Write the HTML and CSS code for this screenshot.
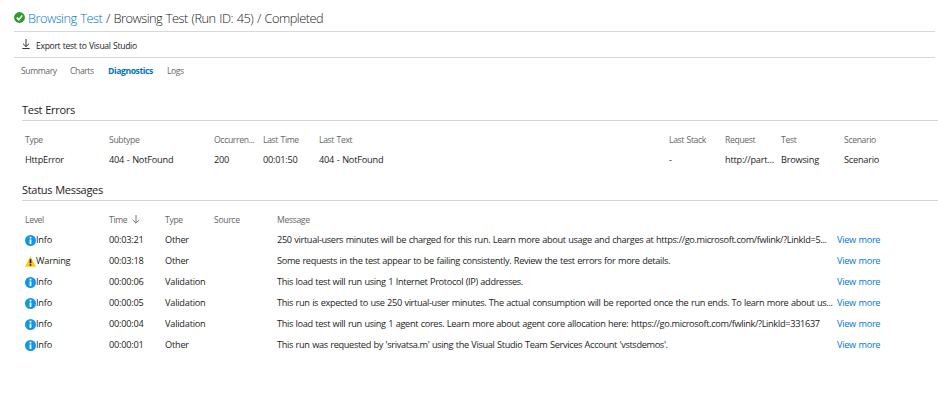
FILE: index.html
```html
<!DOCTYPE html>
<html lang="en">
<head>
<meta charset="utf-8">
<title>Browsing Test</title>
<link rel="stylesheet" href="styles.css">
</head>
<body>
<svg class="defs" width="0" height="0" aria-hidden="true">
  <symbol id="info" viewBox="0 0 10 10"><circle cx="5" cy="5" r="5" fill="#1298e0"/><path d="M5 4v4.2M5 1.7v1.4" stroke="#fff" stroke-width="1.6"/></symbol>
  <symbol id="warning" viewBox="0 0 10 10"><path d="M5 .3 10 9.8H0z" fill="#fc0"/><path d="M5 3v3.5M5 7.4v1.5" stroke="#111" stroke-width="1.5"/></symbol>
</svg>
<header class="title">
  <svg class="ok" viewBox="0 0 11 11"><circle cx="5.5" cy="5.5" r="5.4" fill="#2c9a2c"/><path d="M2.8 5.7 4.8 7.7 8.3 3.5" fill="none" stroke="#fff" stroke-width="1.7"/></svg>
  <h1><a>Browsing Test</a> / Browsing Test (Run ID: 45) / Completed</h1>
</header>
<div class="toolbar">
  <svg class="export" viewBox="0 0 8 10"><path d="M4 0v7.5M1 4.7 4 7.6 7 4.7M.3 9.5h7.4" fill="none" stroke="#222" stroke-width=".9"/></svg>
  <span>Export test to Visual Studio</span>
</div>
<nav class="tabs"><a class="t1">Summary</a><a class="t2">Charts</a><a class="t3 active">Diagnostics</a><a>Logs</a></nav>
<section class="errors">
  <h2>Test Errors</h2>
  <div class="row head"><span>Type</span><span>Subtype</span><span>Occurren...</span><span>Last Time</span><span>Last Text</span><span>Last Stack</span><span>Request</span><span>Test</span><span>Scenario</span></div>
  <div class="row"><span>HttpError</span><span>404 - NotFound</span><span>200</span><span>00:01:50</span><span>404 - NotFound</span><span>-</span><span>http://part...</span><span>Browsing</span><span>Scenario</span></div>
</section>
<section class="messages">
  <h2>Status Messages</h2>
  <div class="row head"><span>Level</span><span>Time <svg class="sort" viewBox="0 0 8 9"><path d="M4 0v8M.6 4.8 4 8.2 7.4 4.8" fill="none" stroke="#666" stroke-width=".9"/></svg></span><span>Type</span><span>Source</span><span>Message</span></div>
  <div class="row"><span class="level"><svg><use href="#info"/></svg>Info</span><span>00:03:21</span><span>Other</span><span></span><span class="message">250 virtual-users minutes will be charged for this run. Learn more about usage and charges at https://go.microsoft.com/fwlink/?LinkId=5...</span><a>View more</a></div>
  <div class="row"><span class="level"><svg><use href="#warning"/></svg>Warning</span><span>00:03:18</span><span>Other</span><span></span><span class="message">Some requests in the test appear to be failing consistently. Review the test errors for more details.</span><a>View more</a></div>
  <div class="row"><span class="level"><svg><use href="#info"/></svg>Info</span><span>00:00:06</span><span>Validation</span><span></span><span class="message">This load test will run using 1 Internet Protocol (IP) addresses.</span><a>View more</a></div>
  <div class="row"><span class="level"><svg><use href="#info"/></svg>Info</span><span>00:00:05</span><span>Validation</span><span></span><span class="message">This run is expected to use 250 virtual-user minutes. The actual consumption will be reported once the run ends. To learn more about us...</span><a>View more</a></div>
  <div class="row"><span class="level"><svg><use href="#info"/></svg>Info</span><span>00:00:04</span><span>Validation</span><span></span><span class="message">This load test will run using 1 agent cores. Learn more about agent core allocation here: https://go.microsoft.com/fwlink/?LinkId=331637</span><a>View more</a></div>
  <div class="row"><span class="level"><svg><use href="#info"/></svg>Info</span><span>00:00:01</span><span>Other</span><span></span><span class="message">This run was requested by 'srivatsa.m' using the Visual Studio Team Services Account 'vstsdemos'.</span><a>View more</a></div>
</section>
</body>
</html>
```
FILE: styles.css
```css
* { box-sizing: border-box; }
body { margin: 0; height: 420px; overflow: hidden; background: #fff; color: #1c1c1c; font: 9.2px/20px "Open Sans", "Noto Sans", sans-serif; }
h1, h2 { margin: 0; font-weight: 400; }
.defs { display: block; height: 0; }
.title { display: flex; align-items: center; height: 32px; margin: 0 3px 0 14px; padding-top: 4px; border-bottom: 1px solid #d8d8d8; }
.ok { width: 11px; height: 11px; margin-right: 3px; }
h1 { font-size: 12.8px; font-weight: 300; letter-spacing: -.52px; word-spacing: .9px; color: #222; white-space: nowrap; }
h1 a { color: #0078d0; }
.toolbar { display: flex; align-items: center; height: 26px; margin: 0 3px 0 14px; padding: 2px 0 0 8px; border-bottom: 1px solid #d8d8d8; font-size: 8.6px; letter-spacing: -.32px; word-spacing: .5px; }
.export { width: 8px; height: 10px; margin: -3px 6px 0 0; }
.tabs { display: flex; height: 38px; padding: 3px 0 0 21px; font-size: 8.6px; letter-spacing: -.4px; color: #666; }
.t1 { width: 49px; }
.t2 { width: 38px; }
.t3 { width: 59px; }
.active { color: #0072c6; font-weight: 700; }
section { padding-left: 22px; }
h2 { height: 25px; margin-bottom: 9px; padding-top: 4px; border-bottom: 1px solid #d4d4d4; font-size: 11px; line-height: 20px; letter-spacing: -.3px; word-spacing: .5px; }
.errors { height: 80px; }
.row { display: grid; height: 21px; padding-left: 3px; white-space: nowrap; letter-spacing: -.22px; word-spacing: .5px; }
.errors .row { grid-template-columns: 84px 105px 49px 56px 350px 56px 56px 63px 1fr; }
.messages .row { grid-template-columns: 84px 56px 49px 63px 560px 1fr; }
.row.head { height: 20px; color: #666; font-size: 8.6px; letter-spacing: -.33px; }
.sort { width: 8px; height: 9px; margin-left: 2px; vertical-align: -1px; }
.level { display: flex; height: 20px; align-items: center; }
.level svg { flex: none; width: 11px; height: 11px; margin: 1px 0 0; }
.message { letter-spacing: -.34px; }
.row a { color: #0078d0; letter-spacing: -.3px; }
```
